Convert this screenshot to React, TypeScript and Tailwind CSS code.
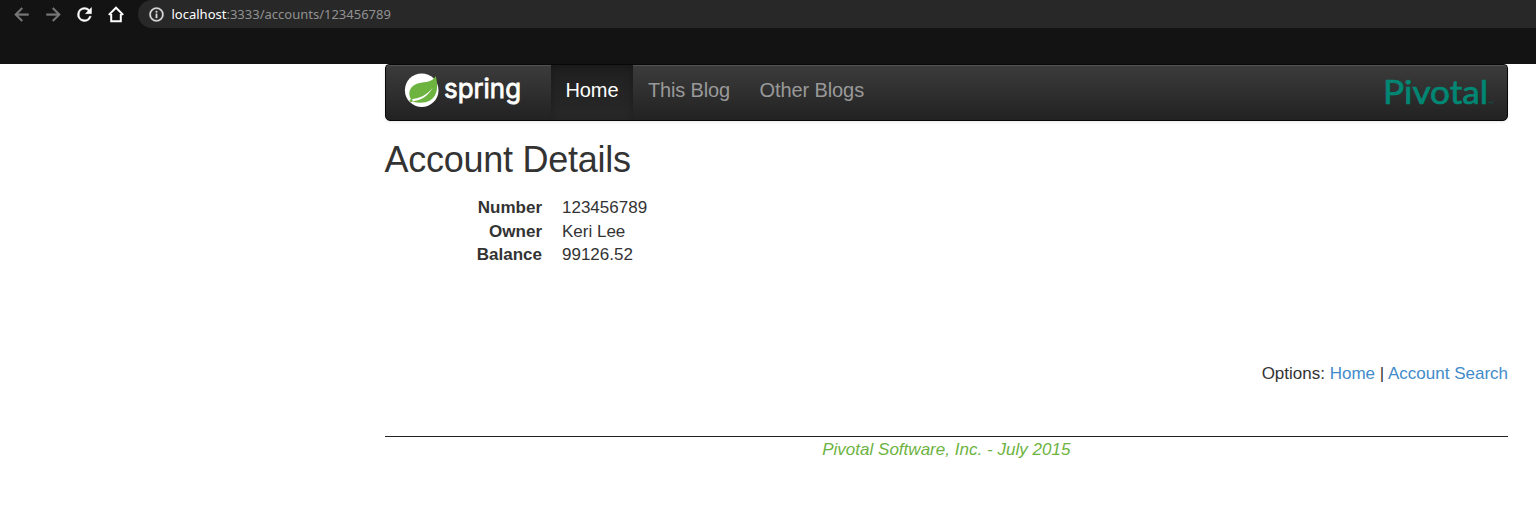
import type { ReactNode } from "react";

function Icon({ children, className }: { children: ReactNode; className: string }) {
  return (
    <svg viewBox="0 0 24 24" className={`block shrink-0 ${className}`} fill="currentColor" stroke="currentColor" strokeWidth="0.5">
      {children}
    </svg>
  );
}

function BrowserBar() {
  return (
    <header className="h-16 bg-[#131313]">
      <div className="flex h-7 items-center">
        <Icon className="ml-[11px] size-[21px] text-[#777]">
          <path d="M20 11H7.83l5.59-5.59L12 4l-8 8 8 8 1.41-1.41L7.83 13H20v-2z" />
        </Icon>
        <Icon className="ml-[10.5px] size-[21px] text-[#777]">
          <path d="M12 4l-1.41 1.41L16.17 11H4v2h12.17l-5.58 5.59L12 20l8-8z" />
        </Icon>
        <Icon className="ml-[10.5px] size-[21px] text-white">
          <path d="M17.65 6.35A7.96 7.96 0 0 0 12 4a8 8 0 1 0 7.73 10h-2.08A6 6 0 1 1 12 6c1.66 0 3.14.69 4.22 1.78L13 11h7V4l-2.35 2.35z" />
        </Icon>
        <svg viewBox="0 0 20 20" className="ml-[11px] block size-5 shrink-0" fill="none" stroke="#fff" strokeWidth="2">
          <path d="M2.8 10.9 10 3.7l7.2 7.2M5.2 10v7.2h9.6V10" />
        </svg>
        <div className="ml-3 flex h-7 flex-1 items-center rounded-l-full bg-[#282828] pl-[9.5px]">
          <Icon className="size-[17px] text-[#ddd]">
            <path d="M11 7h2v2h-2zm0 4h2v6h-2zm1-9a10 10 0 1 0 0 20 10 10 0 0 0 0-20zm0 18a8 8 0 1 1 0-16 8 8 0 0 1 0 16z" />
          </Icon>
          <span className="ml-[7px] whitespace-pre font-['Noto_Sans',sans-serif] text-[13px] leading-7 text-[#929292]">
            <span className="text-white">localhost</span>
            <span>:3333/accounts/123456789</span>
          </span>
        </div>
      </div>
    </header>
  );
}

function SpringLogo() {
  return (
    <svg width="120" height="44" viewBox="0 0 120 44" className="block shrink-0 overflow-visible">
      <circle cx="17.7" cy="18.2" r="16.8" fill="#fff" />
      <path
        d="M31.7 4C29.5 7.8 26.5 9.6 20 10.2C12 11 5.3 14.5 5.3 21.5C5.3 24 6.2 26 7.3 27.3C15 26.6 22.5 23.5 28.7 15.8C24.5 23.8 17.5 28.3 8.3 29.5C14 31.3 21 31.3 26 28.5C34.5 23.5 34 12.5 31.7 4Z"
        fill="#6db33f"
      />
      <circle cx="7.2" cy="28.6" r="1.5" fill="#6db33f" />
      <text
        x="40"
        y="25.7"
        textLength="77"
        lengthAdjust="spacingAndGlyphs"
        fill="#fff"
        stroke="#fff"
        strokeWidth="0.8"
        fontFamily="Inter, sans-serif"
        fontSize="26"
        fontWeight="400"
      >
        spring
      </text>
    </svg>
  );
}

function PivotalLogo() {
  return (
    <svg width="112" height="46" viewBox="0 0 112 46" className="block shrink-0 overflow-visible">
      <text
        x="-2"
        y="32"
        textLength="105"
        lengthAdjust="spacingAndGlyphs"
        fill="#008774"
        stroke="#008774"
        strokeWidth="0.7"
        fontFamily="Lato, sans-serif"
        fontSize="33"
      >
        Pivotal
      </text>
      <path d="M103.5 30.5h1.5M106 31.500v-1.500h1.300v1.500" stroke="#00685b" strokeWidth=".6" fill="none" />
    </svg>
  );
}

function Navbar() {
  return (
    <nav className="flex h-[57px] justify-between rounded-b-[5px] rounded-t-[4px] border border-[#080808] bg-linear-to-b from-[#3c3c3c] to-[#222] shadow-[inset_0_1px_0_rgba(255,255,255,0.12),0_1px_3px_rgba(0,0,0,0.1)]">
      <div className="flex">
        <div className="w-[165px] pl-[18px] pt-[7px]">
          <SpringLogo />
        </div>
        <div className="flex text-[20px] leading-[50px] text-[#999]">
          <a className="h-[55px] w-[82px] bg-linear-to-b from-[#202020] to-[#282828] pl-[15px] tracking-[-0.1px] text-white shadow-[inset_0_3px_9px_rgba(0,0,0,0.25)]">
            Home
          </a>
          <a className="ml-[15.5px] tracking-[-0.15px]">This Blog</a>
          <a className="ml-[29.5px] tracking-[-0.1px]">Other Blogs</a>
        </div>
      </div>
      <div className="pr-[10px] pt-[7px]">
        <PivotalLogo />
      </div>
    </nav>
  );
}

const details = [
  { label: "Number", value: "123456789" },
  { label: "Owner", value: "Keri Lee" },
  { label: "Balance", value: "99126.52" },
];

export default function App() {
  return (
    <div className="h-[512px] overflow-hidden bg-white font-['Liberation_Sans',Arial,sans-serif] text-[17px] leading-6 text-[#333]">
      <BrowserBar />
      <main className="ml-[384.5px] mr-7">
        <Navbar />
        <h1 className="mt-[19px] text-[36px] leading-10 tracking-[-0.25px]">Account Details</h1>
        <dl className="mt-4">
          {details.map(({ label, value }) => (
            <div key={label} className="flex h-[23.7px] leading-[23.7px]">
              <dt className="w-[157.5px] text-right font-bold">{label}</dt>
              <dd className="ml-5">{value}</dd>
            </div>
          ))}
        </dl>
        <div className="mt-[95px] text-right">
          Options: <a className="text-[#428bca]">Home</a> | <a className="text-[#428bca]">Account Search</a>
        </div>
        <footer className="mt-[50px] border-t border-[#222] text-center italic leading-[26px] tracking-[0.02px] text-[#6db33f]">
          Pivotal Software, Inc. - July 2015
        </footer>
      </main>
    </div>
  );
}
